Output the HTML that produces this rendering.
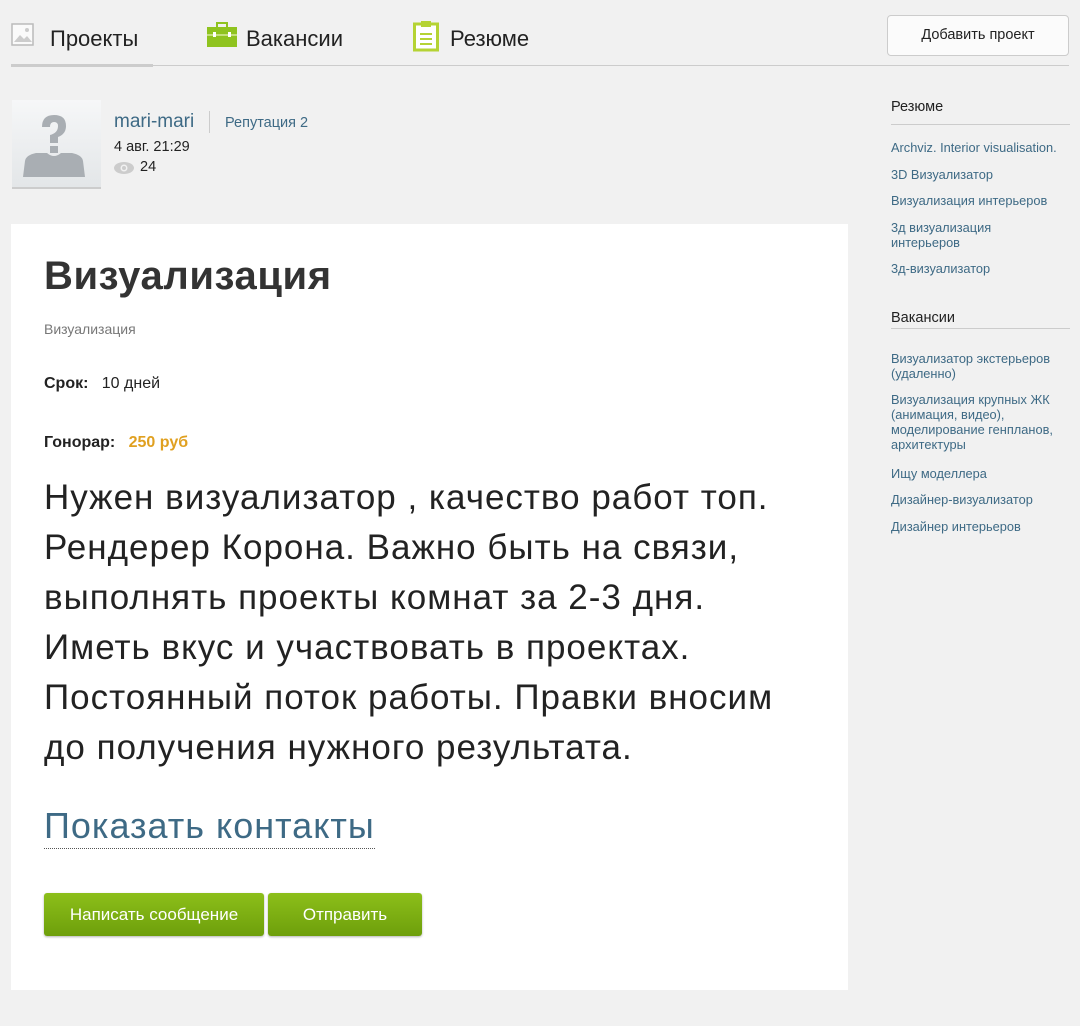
<!DOCTYPE html>
<html><head><meta charset="utf-8"><style>
*{margin:0;padding:0;box-sizing:border-box}
body{width:1080px;height:1026px;background:#f1f1f1;font-family:"Liberation Sans",sans-serif;position:relative;overflow:hidden;color:#222}
.a{position:absolute;white-space:nowrap}
.nav{font-size:22px;color:#222}
.side{font-size:12.8px;color:#3e6a85;line-height:15px;white-space:normal;width:185px}
.btn{position:absolute;height:43px;border-radius:3px;background:linear-gradient(#8cbf1a,#6e9f0b);color:#fff;font-size:17px;text-align:center;line-height:43px;box-shadow:0 1px 2px rgba(0,0,0,.3)}
</style></head><body>
<svg class="a" style="left:11px;top:23px" width="24" height="24" viewBox="0 0 24 24"><rect x="1" y="1" width="21" height="21" fill="#fafafa" stroke="#bbb" stroke-width="1.5"/><path d="M3 19 L9 12 L13 16 L16 13 L21 19Z" fill="#ccc"/><circle cx="16" cy="7" r="2" fill="#ccc"/></svg>
<div class="a nav" style="left:50px;top:26px">Проекты</div>
<div class="a" style="left:11px;top:64px;width:142px;height:3px;background:#ccc"></div>
<div class="a" style="left:11px;top:65px;width:1058px;height:1px;background:#ccc"></div>
<svg class="a" style="left:207px;top:22px" width="30" height="26" viewBox="0 0 30 26"><rect x="10" y="1" width="10" height="5" fill="none" stroke="#8fc31f" stroke-width="2"/><rect x="0" y="5" width="30" height="20" fill="#8fc31f"/><rect x="0" y="12" width="30" height="2" fill="#c5e07e"/><rect x="6" y="10" width="3" height="5" fill="#fff"/><rect x="21" y="10" width="3" height="5" fill="#fff"/></svg>
<div class="a nav" style="left:246px;top:26px">Вакансии</div>
<svg class="a" style="left:413px;top:20px" width="26" height="32" viewBox="0 0 26 32"><rect x="1.5" y="4" width="23" height="26" fill="#fff" stroke="#b5d334" stroke-width="3"/><rect x="8" y="1" width="10" height="6" fill="#b5d334"/><rect x="7" y="13" width="12" height="2" fill="#b5d334"/><rect x="7" y="18" width="12" height="2" fill="#b5d334"/><rect x="7" y="23" width="12" height="2" fill="#b5d334"/></svg>
<div class="a nav" style="left:450px;top:26px">Резюме</div>
<div class="a" style="left:887px;top:15px;width:182px;height:41px;border:1px solid #ccc;border-radius:4px;background:#fbfbfb;font-size:14.5px;text-align:center;line-height:39px;color:#222">Добавить проект</div>

<div class="a" style="left:12px;top:100px;width:89px;height:89px;background:linear-gradient(#f6f7f8,#e3e6e8);border-bottom:2px solid #ccc"></div>
<svg class="a" style="left:20px;top:113px" width="68" height="64" viewBox="0 0 68 64"><path d="M22 14 Q22 2 34 2 Q46 2 46 13 Q46 21 38 24 L38 30 L30 30 L30 22 Q38 20 38 13 Q38 9 34 9 Q30 9 30 14Z" fill="#a9aeb3"/><rect x="30" y="33" width="8" height="7" fill="#a9aeb3"/><path d="M3 64 L5 48 Q6 42 16 40 L27 40 Q34 46 41 40 L52 40 Q62 42 63 48 L65 64Z" fill="#a9aeb3"/></svg>
<div class="a" style="left:114px;top:111px;font-size:19px;color:#3e6a85">mari-mari</div>
<div class="a" style="left:209px;top:111px;width:1px;height:22px;background:#ccc"></div>
<div class="a" style="left:225px;top:115px;font-size:14.5px;color:#3e6a85">Репутация 2</div>
<div class="a" style="left:114px;top:139px;font-size:14.5px">4 авг. 21:29</div>
<svg class="a" style="left:114px;top:162px" width="20" height="12" viewBox="0 0 20 12"><ellipse cx="10" cy="6" rx="10" ry="6" fill="#ccc"/><circle cx="10" cy="6" r="3.5" fill="#f1f1f1"/><circle cx="10" cy="6" r="2" fill="#ccc"/></svg>
<div class="a" style="left:140px;top:159px;font-size:14.5px">24</div>

<div class="a" style="left:11px;top:224px;width:837px;height:766px;background:#fff"></div>
<div class="a" style="left:44px;top:254px;font-size:40px;font-weight:bold;color:#333;letter-spacing:0.6px">Визуализация</div>
<div class="a" style="left:44px;top:321px;font-size:14px;color:#777">Визуализация</div>
<div class="a" style="left:44px;top:375px;font-size:16px"><b>Срок:</b>&nbsp;&nbsp; 10 дней</div>
<div class="a" style="left:44px;top:434px;font-size:16px"><b>Гонорар:</b>&nbsp;&nbsp; <b style="color:#e0a020">250 руб</b></div>
<div class="a" style="left:44px;top:473px;font-size:35px;letter-spacing:1px;line-height:50px;color:#222;white-space:normal;width:800px">Нужен визуализатор , качество работ топ.<br>Рендерер Корона. Важно быть на связи,<br>выполнять проекты комнат за 2-3 дня.<br>Иметь вкус и участвовать в проектах.<br>Постоянный поток работы. Правки вносим<br>до получения нужного результата.</div>
<div class="a" style="left:44px;top:803px;font-size:36px;letter-spacing:1px;color:#3e6a85;border-bottom:1px dotted #555;line-height:45px">Показать контакты</div>
<div class="btn" style="left:44px;top:893px;width:220px">Написать сообщение</div>
<div class="btn" style="left:268px;top:893px;width:154px">Отправить</div>

<div class="a" style="left:891px;top:99px;font-size:14.5px">Резюме</div>
<div class="a" style="left:891px;top:124px;width:179px;height:1px;background:#ccc"></div>
<div class="a side" style="left:891px;top:140px">Archviz. Interior visualisation.</div>
<div class="a side" style="left:891px;top:167px">3D Визуализатор</div>
<div class="a side" style="left:891px;top:193px">Визуализация интерьеров</div>
<div class="a side" style="left:891px;top:220px">3д визуализация<br>интерьеров</div>
<div class="a side" style="left:891px;top:261px">3д-визуализатор</div>
<div class="a" style="left:891px;top:310px;font-size:14.5px">Вакансии</div>
<div class="a" style="left:891px;top:328px;width:179px;height:1px;background:#ccc"></div>
<div class="a side" style="left:891px;top:351px">Визуализатор экстерьеров<br>(удаленно)</div>
<div class="a side" style="left:891px;top:392px">Визуализация крупных ЖК<br>(анимация, видео),<br>моделирование генпланов,<br>архитектуры</div>
<div class="a side" style="left:891px;top:466px">Ищу моделлера</div>
<div class="a side" style="left:891px;top:492px">Дизайнер-визуализатор</div>
<div class="a side" style="left:891px;top:519px">Дизайнер интерьеров</div>
</body></html>
